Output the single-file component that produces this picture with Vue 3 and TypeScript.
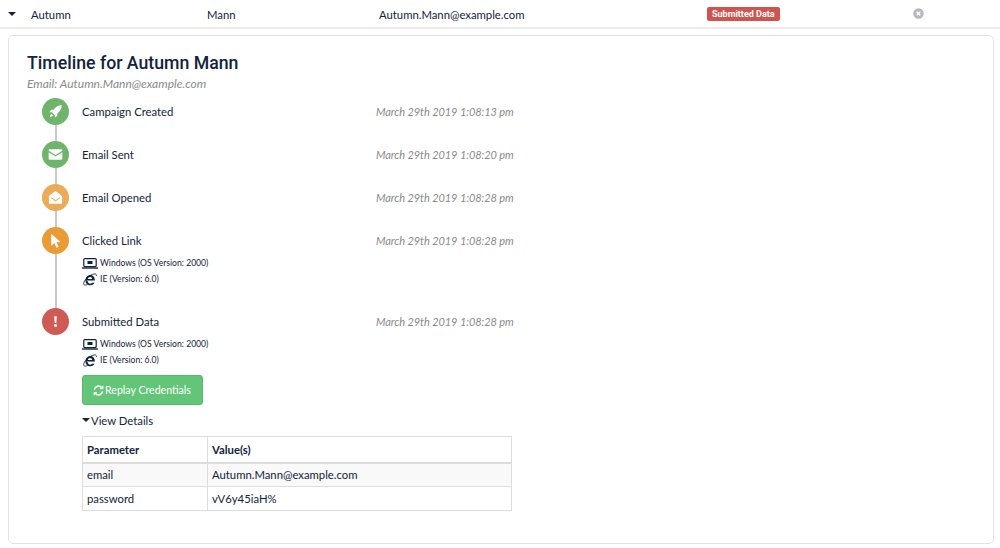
<script setup lang="ts">
interface Ev { title: string; time: string; color: string; icon: string; env?: boolean; h: number }
const events: Ev[] = [
  { title: 'Campaign Created', time: 'March 29th 2019 1:08:13 pm', color: '#6eb56b', icon: 'rocket', h: 43 },
  { title: 'Email Sent', time: 'March 29th 2019 1:08:20 pm', color: '#6eb56b', icon: 'mail', h: 43 },
  { title: 'Email Opened', time: 'March 29th 2019 1:08:28 pm', color: '#ebab58', icon: 'open', h: 43 },
  { title: 'Clicked Link', time: 'March 29th 2019 1:08:28 pm', color: '#e99c35', icon: 'cursor', env: true, h: 81 },
  { title: 'Submitted Data', time: 'March 29th 2019 1:08:28 pm', color: '#cf5b55', icon: 'warn', env: true, h: 0 },
]
</script>

<template>
  <div class="page">
    <div class="row">
      <span class="caret"></span>
      <span>Autumn</span>
      <span>Mann</span>
      <span>Autumn.Mann@example.com</span>
      <span><span class="badge">Submitted Data</span></span>
      <svg class="close" width="11" height="11" viewBox="0 0 11 11">
        <circle cx="5.5" cy="5.5" r="5.2" fill="#b4b8bb" />
        <path d="M3.7 3.7l3.6 3.6M7.3 3.7l-3.6 3.6" stroke="#fff" stroke-width="1.6" />
      </svg>
    </div>
    <div class="card">
      <h2>Timeline for Autumn Mann</h2>
      <div class="sub">Email: Autumn.Mann@example.com</div>
      <div class="timeline">
        <div v-for="(e, i) in events" :key="e.title" class="ev" :style="e.h ? { height: e.h + 'px' } : undefined">
          <div class="rail">
            <div v-if="i < events.length - 1" class="line"></div>
            <div class="dot" :style="{ background: e.color }">
              <svg width="15" height="15" viewBox="0 0 14 14" fill="#fff">
                <path v-if="e.icon === 'rocket'" d="M12.8 1.2c-3.2.1-5.6 1.3-7.5 4.1H3L1.3 7.6h2.4l2.7 2.7v2.4l2.3-1.7V8.700c2.800-1.900 4-4.300 4.100-7.500zM3.400 9.300c-1 .4-1.500 1.200-1.700 3 1.800-.2 2.600-.7 3-1.700z" />
                <path v-else-if="e.icon === 'mail'" d="M.6 3.200c0-.6.500-1 1-1h10.800c.6 0 1 .4 1 1v.3L7 7.500.6 3.500zM.6 4.800L7 8.800l6.400-4v6c0 .6-.4 1-1 1H1.600c-.5 0-1-.4-1-1z" />
                <template v-else-if="e.icon === 'open'">
                  <path d="M.8 5.600L7 1l6.200 4.600v6.400c0 .5-.4.900-.9.900H1.700c-.5 0-.9-.4-.9-.9zM3.200 6.800l-.6.7L7 10.800l4.400-3.300-.6-.7L7 9.600z" fill-rule="evenodd" />
                </template>
                <path v-else-if="e.icon === 'cursor'" d="M3 .6v11.400l2.900-2.600 2 4.400 2-.9-2-4.300 3.800-.3z" />
                <path v-else d="M5.800 2h2.400l-.4 6.400H6.200zM5.800 9.600h2.400V12H5.800z" />
              </svg>
            </div>
          </div>
          <div class="body">
            <div class="head">
              <span class="name">{{ e.title }}</span>
              <span class="time">{{ e.time }}</span>
            </div>
            <template v-if="e.env">
              <div class="env first">
                <svg width="16" height="11" viewBox="0 0 16 11">
                  <rect x="1.800" y="0.600" width="12.400" height="8" rx="1" fill="none" stroke="#10243a" stroke-width="1.200" />
                  <rect x="5.500" y="3" width="5" height="3" fill="#10243a" />
                  <path d="M0 10h16" stroke="#10243a" stroke-width="1.400" />
                </svg>
                Windows (OS Version: 2000)
              </div>
              <div class="env">
                <svg width="16" height="13" viewBox="0 0 16 13">
                  <path d="M4.200 7.600h8.600c.3-3-1.600-5.500-4.500-5.500C5.700 2.100 3.400 4.500 3.400 7.300c0 3 2.200 5 5 5 2 0 3.500-.9 4.200-2.500H10c-.4.600-1 .9-1.800.9-1.400 0-2.300-.9-2.300-2.100zM5.900 6c.1-1.200 1-1.900 2.200-1.900 1.200 0 2.100.8 2.100 1.900z" fill="#10243a" fill-rule="evenodd" />
                  <path d="M1.700 11.500C.8 9.800 4.500 3.700 10.500 1.400c2.700-1 4.200-.6 3.800 1.500M2 11.500c.7.900 2.300.6 3.500 0" fill="none" stroke="#10243a" stroke-width=".9" />
                </svg>
                IE (Version: 6.0)
              </div>
            </template>
            <template v-if="i === events.length - 1">
              <button class="replay">
                <svg width="11" height="11" viewBox="0 0 12 12" fill="none" stroke="#fff" stroke-width="1.800">
                  <path d="M1.500 5A4.600 4.600 0 0 1 9.500 2.800M10.500 7A4.600 4.600 0 0 1 2.500 9.200" />
                  <path d="M11.300 .3v4.200H7.100zM.7 11.700V7.500h4.200z" fill="#fff" stroke="none" />
                </svg>
                <span>Replay Credentials</span>
              </button>
              <div class="details"><span class="mini-caret"></span>View Details</div>
              <table>
                <thead><tr><th>Parameter</th><th>Value(s)</th></tr></thead>
                <tbody>
                  <tr class="odd"><td>email</td><td>Autumn.Mann@example.com</td></tr>
                  <tr><td>password</td><td>vV6y45iaH%</td></tr>
                </tbody>
              </table>
            </template>
          </div>
        </div>
      </div>
    </div>
  </div>
</template>

<style>
html, body { margin: 0; background: #fff; }
</style>

<style scoped>
.page { width: 1000px; height: 548px; overflow: hidden; font-family: Lato, "Noto Sans", sans-serif; font-size: 11.300px; color: #10243a; }
.row { display: grid; grid-template-columns: 31px 176px 172px 328px 205px 11px; align-items: center; height: 26px; padding-top: 1px; border-bottom: 2px solid #ebebeb; box-sizing: content-box; }
.caret { justify-self: center; margin-left: -8px; width: 0; height: 0; border: 4px solid transparent; border-top: 4px solid #10243a; border-bottom: 0; }
.badge { display: block; width: fit-content; background: #cf544e; color: #fff; font: 700 9px/14px Roboto, sans-serif; padding: 0 5px; border-radius: 2px; margin-top: -1px; }
.close { display: block; margin: -2px 0 0 1px; }
.card { margin: 6px 6px 0 8px; box-sizing: border-box; height: 509px; border: 1px solid #e3e3e3; border-radius: 5px; padding: 16px 18px 0; }
h2 { margin: 0; font: 500 17.700px/22px Roboto, sans-serif; color: #10243a; }
.sub { margin-top: 2px; font-style: italic; font-size: 12px; line-height: 15px; color: #8a8a8a; }
.timeline { margin-top: 7px; margin-left: 15px; }
.ev { display: flex; }
.rail { position: relative; width: 27px; flex: none; margin-right: 13px; }
.dot { position: relative; width: 27px; height: 27px; border-radius: 50%; display: flex; align-items: center; justify-content: center; box-sizing: border-box; }
.line { position: absolute; left: 13px; top: 13px; bottom: -13px; width: 2px; background: #c9c9c9; }
.body { flex: 1; min-width: 0; }
.head { display: flex; height: 27px; align-items: center; }
.name { width: 294px; }
.time { font-style: italic; color: #8a8a8a; font-size: 11px; letter-spacing: -.07px; }
.env { display: flex; align-items: center; gap: 2px; font-size: 8.600px; height: 16px; line-height: 16px; }
.first { margin-top: 1px; }
.env svg { flex: none; }
.replay { display: flex; align-items: center; gap: 1px; margin-top: 7px; width: 121px; height: 30px; padding: 0 0 0 10px; background: #62c577; border: 1px solid #58b96c; border-radius: 3px; color: #fff; font: 10.600px Lato, sans-serif; box-sizing: border-box; white-space: nowrap; }
.details { display: flex; align-items: center; gap: 1px; margin-top: 8px; height: 14px; }
.mini-caret { width: 0; height: 0; border: 4px solid transparent; border-top: 4px solid #10243a; border-bottom: 0; }
table { margin-top: 9px; width: 430px; border-collapse: collapse; table-layout: fixed; }
th, td { border: 1px solid #ddd; padding: 0 4px; height: 24px; text-align: left; box-sizing: border-box; }
th { font-weight: 700; border-bottom-width: 2px; height: 26px; }
th:first-child, td:first-child { width: 125px; }
.odd td { background: #f9f9f9; }
</style>
